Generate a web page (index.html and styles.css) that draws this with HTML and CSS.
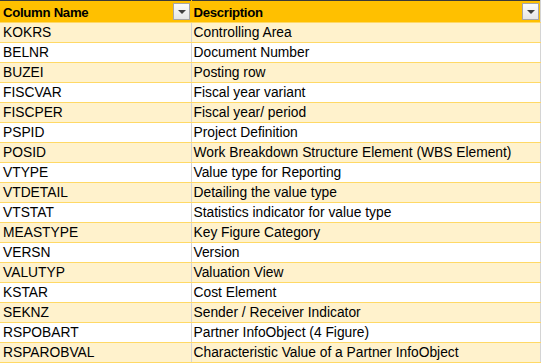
FILE: index.html
```html
<!DOCTYPE html>
<html>
<head>
<meta charset="utf-8">
<link rel="stylesheet" href="styles.css">
</head>
<body>
<table class="sheet">
  <colgroup><col class="c1"><col class="c2"></colgroup>
  <thead>
    <tr>
      <th><div class="hcell"><span>Column Name</span><span class="dd"></span></div></th>
      <th><div class="hcell"><span>Description</span><span class="dd"></span></div></th>
    </tr>
  </thead>
  <tbody>
    <tr><td>KOKRS</td><td>Controlling Area</td></tr>
    <tr><td>BELNR</td><td>Document Number</td></tr>
    <tr><td>BUZEI</td><td>Posting row</td></tr>
    <tr><td>FISCVAR</td><td>Fiscal year variant</td></tr>
    <tr><td>FISCPER</td><td>Fiscal year/ period</td></tr>
    <tr><td>PSPID</td><td>Project Definition</td></tr>
    <tr><td>POSID</td><td>Work Breakdown Structure Element (WBS Element)</td></tr>
    <tr><td>VTYPE</td><td>Value type for Reporting</td></tr>
    <tr><td>VTDETAIL</td><td>Detailing the value type</td></tr>
    <tr><td>VTSTAT</td><td>Statistics indicator for value type</td></tr>
    <tr><td>MEASTYPE</td><td>Key Figure Category</td></tr>
    <tr><td>VERSN</td><td>Version</td></tr>
    <tr><td>VALUTYP</td><td>Valuation View</td></tr>
    <tr><td>KSTAR</td><td>Cost Element</td></tr>
    <tr><td>SEKNZ</td><td>Sender / Receiver Indicator</td></tr>
    <tr><td>RSPOBART</td><td>Partner InfoObject (4 Figure)</td></tr>
    <tr><td>RSPAROBVAL</td><td>Characteristic Value of a Partner InfoObject</td></tr>
  </tbody>
</table>
</body>
</html>
```

FILE: styles.css
```css
html, body {
  margin: 0;
  padding: 0;
  background: #ffffff;
}

.sheet {
  border-collapse: collapse;
  table-layout: fixed;
  width: 540px;
  font-family: "Liberation Sans", Arial, sans-serif;
  font-size: 13.8px;
  color: #000000;
  border-top: 1px solid #3a3a3a;
}

.c1 { width: 191px; }
.c2 { width: 349px; }

.sheet th {
  background: #ffc000;
  padding: 0;
  text-align: left;
  font-weight: bold;
  font-size: 13.2px;
  letter-spacing: -0.3px;
  border-bottom: 1px solid #ffd966;
  border-right: 1px solid #ffc000;
}

.sheet th:last-child {
  border-right: 1px solid #d4d4d4;
}

.hcell {
  display: flex;
  align-items: center;
  justify-content: space-between;
  height: 21px;
  padding-left: 3px;
  padding-right: 1px;
  box-sizing: border-box;
}

.sheet th:last-child .hcell {
  padding-left: 2px;
}

.hcell > span:first-child {
  padding-top: 2px;
}

.dd {
  width: 15px;
  height: 15px;
  border: 1px solid #a6a6a6;
  background: linear-gradient(#fbfbfb, #e6e6e6);
  position: relative;
  flex: none;
}

.dd::after {
  content: "";
  position: absolute;
  left: 4px;
  top: 6px;
  border-left: 4px solid transparent;
  border-right: 4px solid transparent;
  border-top: 4px solid #404040;
}

.sheet td {
  height: 19px;
  padding: 1px 0 0 3px;
  box-sizing: border-box;
  border-bottom: 1px solid #ffd966;
  border-right: 1px solid #d4d4d4;
  white-space: nowrap;
  overflow: hidden;
  vertical-align: middle;
  line-height: 18px;
}

.sheet td:last-child {
  padding-left: 2px;
}

.sheet tbody tr:nth-child(odd) td {
  background: #fff2cc;
}
```
